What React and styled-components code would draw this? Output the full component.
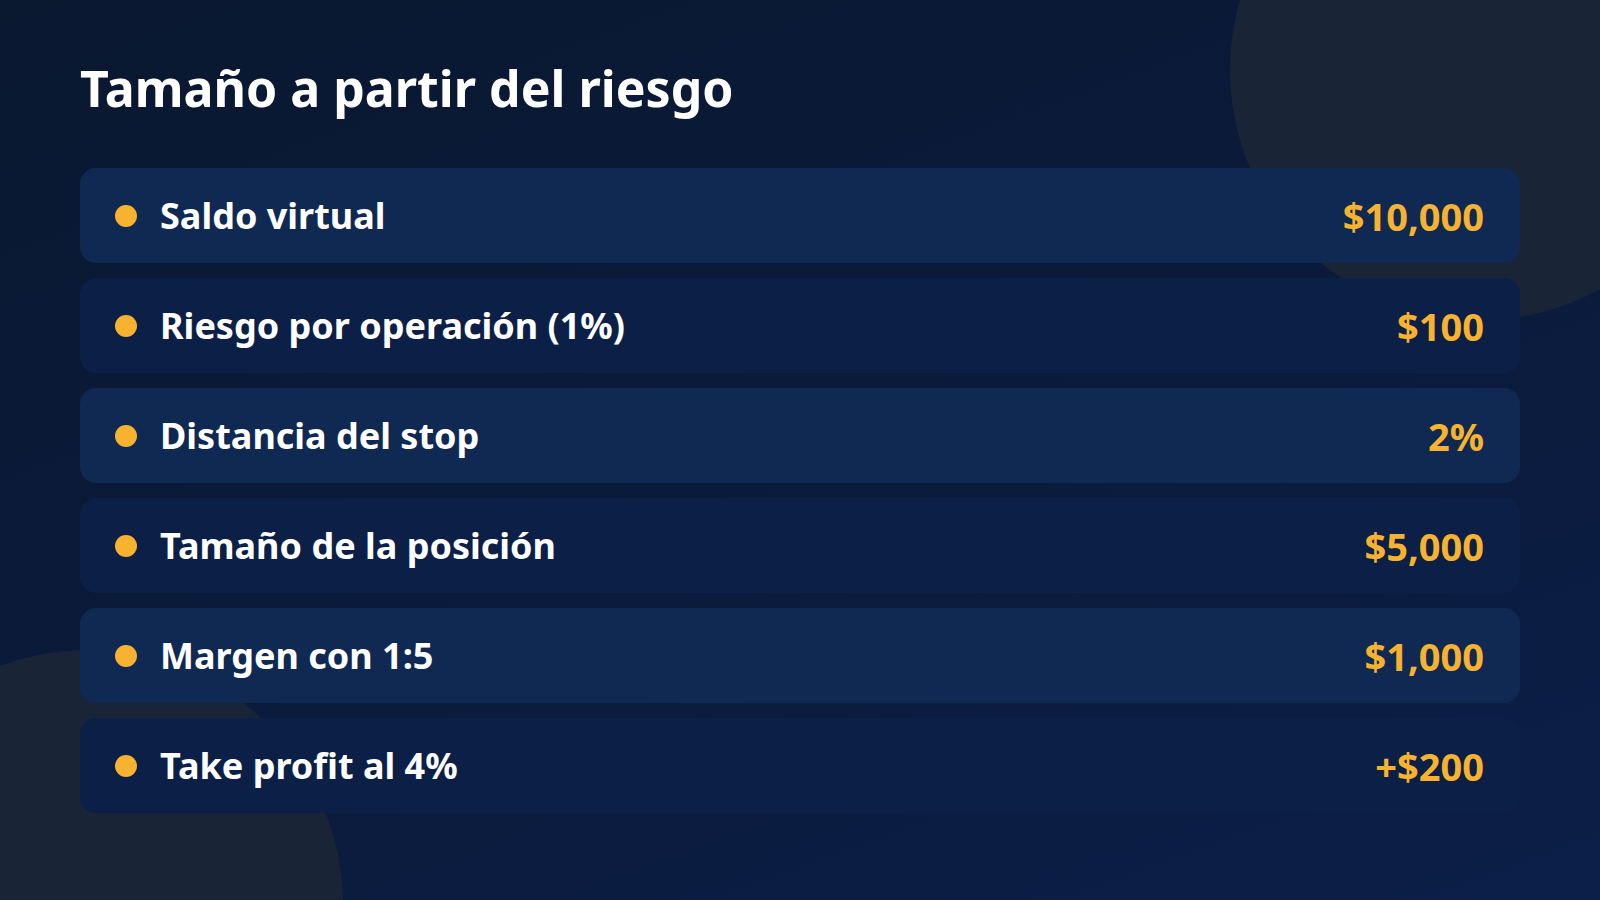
import styled, { createGlobalStyle } from 'styled-components'

const GlobalStyle = createGlobalStyle`
    html, body {
        margin: 0;
        padding: 0;
        background: #0a1830;
    }
    * {
        box-sizing: border-box;
    }
`

const rows = [
    { label: 'Saldo virtual', value: '$10,000' },
    { label: 'Riesgo por operación (1%)', value: '$100' },
    { label: 'Distancia del stop', value: '2%' },
    { label: 'Tamaño de la posición', value: '$5,000' },
    { label: 'Margen con 1:5', value: '$1,000' },
    { label: 'Take profit al 4%', value: '+$200' },
]

export default function App() {
    return (
        <>
            <GlobalStyle />
            <Slide>
                <Blob $top="-180px" $left="1230px" $size="500px" />
                <Blob $top="650px" $left="-167px" $size="510px" />
                <Content>
                    <Title>Tamaño a partir del riesgo</Title>
                    <List>
                        {rows.map((row, i) => (
                            <Row key={row.label} $alt={i % 2 === 1}>
                                <Dot />
                                <Label>{row.label}</Label>
                                <Value>{row.value}</Value>
                            </Row>
                        ))}
                    </List>
                </Content>
            </Slide>
        </>
    )
}

const Slide = styled.div`
    position: relative;
    width: 1600px;
    height: 900px;
    overflow: hidden;
    background: linear-gradient(160deg, #0a1830 0%, #0a1a3a 50%, #0c1f48 100%);
    font-family: "Noto Sans", "Open Sans", sans-serif;
`
const Blob = styled.div`
    position: absolute;
    top: ${p => p.$top};
    left: ${p => p.$left};
    width: ${p => p.$size};
    height: ${p => p.$size};
    border-radius: 50%;
    background: #1a2437;
`
const Content = styled.div`
    position: relative;
    display: flex;
    flex-direction: column;
    padding: 56px 80px 0;
`
const Title = styled.h1`
    margin: 0 0 48px;
    color: #ffffff;
    font-size: 50px;
    font-weight: 700;
    line-height: 64px;
`
const List = styled.div`
    display: flex;
    flex-direction: column;
    gap: 15px;
`
const Row = styled.div`
    display: flex;
    align-items: center;
    height: 95px;
    padding: 0 36px 0 35px;
    border-radius: 16px;
    background: ${p => (p.$alt ? '#0c1f46' : '#0f2953')};
`
const Dot = styled.span`
    width: 22px;
    height: 22px;
    border-radius: 50%;
    background: #f7b32f;
    flex-shrink: 0;
`
const Label = styled.span`
    margin-left: 23px;
    flex: 1;
    color: #ffffff;
    font-size: 36px;
    font-weight: 700;
`
const Value = styled.span`
    color: #f7b32f;
    font-size: 38px;
    font-weight: 700;
`
